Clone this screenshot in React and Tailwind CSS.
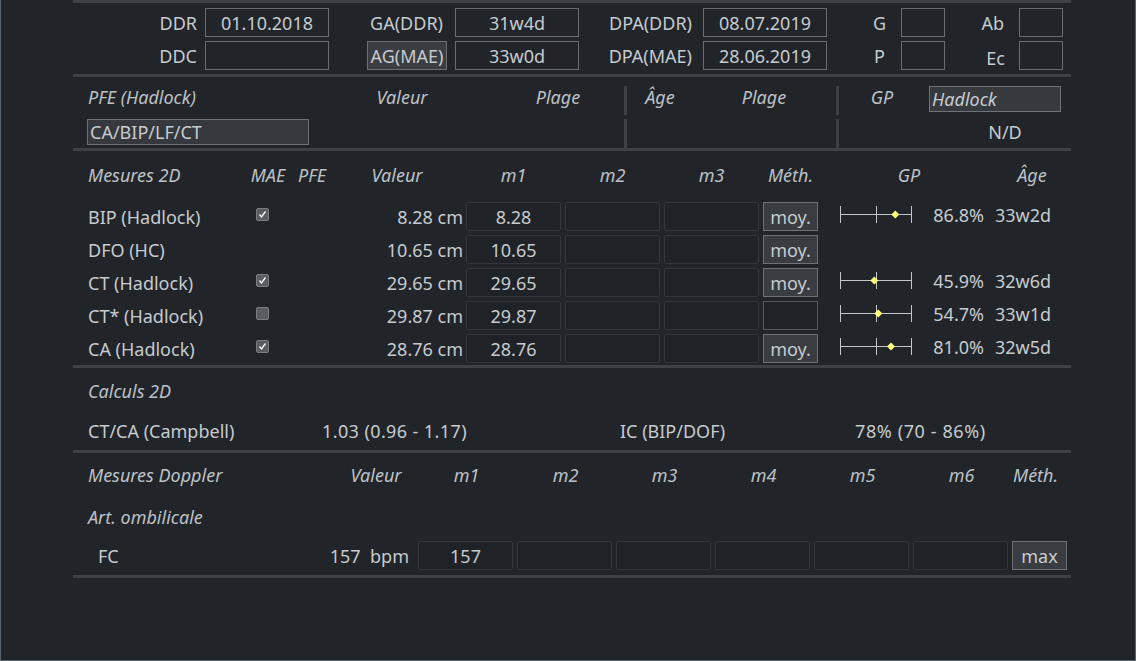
import React from "react";

const rows2d = [
  { name: "BIP (Hadlock)", chk: true, val: "8.28 cm", m1: "8.28", meth: "moy.", gp: 55.3, pct: "86.8%", age: "33w2d" },
  { name: "DFO (HC)", chk: null, val: "10.65 cm", m1: "10.65", meth: "moy." },
  { name: "CT (Hadlock)", chk: true, val: "29.65 cm", m1: "29.65", meth: "moy.", gp: 34.3, pct: "45.9%", age: "32w6d" },
  { name: "CT* (Hadlock)", chk: false, val: "29.87 cm", m1: "29.87", meth: "", gp: 38.3, pct: "54.7%", age: "33w1d" },
  { name: "CA (Hadlock)", chk: true, val: "28.76 cm", m1: "28.76", meth: "moy.", gp: 51, pct: "81.0%", age: "32w5d" },
];

const Sep = ({ className = "" }) => <div className={`h-[3px] bg-[#3c4146] ${className}`} />;

function Field({ w = "w-[124px]", children }) {
  return (
    <div className={`${w} h-[29px] shrink-0 border border-[#686c70] flex items-center justify-center`}>
      {children}
    </div>
  );
}

function Cell({ w = "w-[95px]", children }) {
  return (
    <div className={`${w} h-[29px] shrink-0 rounded-[2px] border border-[#32363a] bg-[#1f2226] flex items-center justify-center`}>
      {children}
    </div>
  );
}

function MethBtn({ label }) {
  if (!label)
    return <div className="w-[55px] h-[29px] shrink-0 border border-[#55595d] bg-[#1f2226]" />;
  return (
    <div className="w-[55px] h-[29px] shrink-0 border border-[#6d7074] bg-[#393c40] flex items-center justify-center">
      {label}
    </div>
  );
}

function Check({ on }) {
  return (
    <div className="w-[13px] h-[13px] rounded-[2px] border border-[#7a7e83] bg-[#595d62] flex items-center justify-center -translate-y-[2px]">
      {on && (
        <svg width="9" height="9" viewBox="0 0 9 9">
          <path d="M1.5 4.5 L3.5 7 L7.5 1.5" fill="none" stroke="#ffffff" strokeWidth="1.3" />
        </svg>
      )}
    </div>
  );
}

function GpBar({ pos }) {
  return (
    <svg width="72" height="17" className="block">
      <line x1="0" y1="8.5" x2="72" y2="8.5" stroke="#c3c7cb" />
      <line x1="0.5" y1="0" x2="0.5" y2="17" stroke="#c3c7cb" />
      <line x1="36.5" y1="0" x2="36.5" y2="17" stroke="#c3c7cb" />
      <line x1="71.5" y1="0" x2="71.5" y2="17" stroke="#c3c7cb" />
      <path d={`M${pos} 4.5 L${pos + 4} 8.5 L${pos} 12.5 L${pos - 4} 8.5 Z`} fill="#ffff7a" />
    </svg>
  );
}

const Hd = ({ w, left, children }) => (
  <div className={`${w} shrink-0 ${left ? "text-left" : "text-center"} italic text-[18px] text-[#bcc1c7]`}>
    {children}
  </div>
);

export default function App() {
  return (
    <div
      className="w-[1136px] h-[661px] bg-[#212428] border-l border-r border-b border-[#56656f] text-[18px] text-[#c6cbd0] leading-none overflow-hidden"
      style={{ fontFamily: '"Noto Sans", "DejaVu Sans", sans-serif' }}
    >
      <div className="ml-[72px] w-[998px]">
        {/* dates */}
        <Sep className="h-[2px]" />
        <div className="pt-[5px] flex flex-col gap-[4px]">
          <div className="flex items-center h-[29px]">
            <div className="w-[132px] text-right pr-[8px]">DDR</div>
            <Field>01.10.2018</Field>
            <div className="w-[38px]" />
            <div className="w-[80px] text-right pr-[4px]">GA(DDR)</div>
            <div className="w-[8px]" />
            <Field>31w4d</Field>
            <div className="w-[124px] text-right pr-[11px]">DPA(DDR)</div>
            <Field>08.07.2019</Field>
            <div className="w-[74px] text-right pr-[15px]">G</div>
            <Field w="w-[44px]" />
            <div className="w-[74px] text-right pr-[15px]">Ab</div>
            <Field w="w-[44px]" />
          </div>
          <div className="flex items-center h-[29px]">
            <div className="w-[132px] text-right pr-[8px]">DDC</div>
            <Field />
            <div className="w-[38px]" />
            <div className="w-[80px] h-[29px] bg-[#3a3d41] border border-[#6c6f73] flex items-center justify-center">
              AG(MAE)
            </div>
            <div className="w-[8px]" />
            <Field>33w0d</Field>
            <div className="w-[124px] text-right pr-[11px]">DPA(MAE)</div>
            <Field>28.06.2019</Field>
            <div className="w-[74px] text-right pr-[16px]">P</div>
            <Field w="w-[44px]" />
            <div className="w-[74px] text-right pr-[14px] translate-y-[2px]">Ec</div>
            <Field w="w-[44px]" />
          </div>
        </div>
        <Sep className="mt-[4px]" />

        {/* PFE */}
        <div className="pt-[9px] flex flex-col gap-[4px]">
          <div className="flex h-[29px]">
            <div className="w-[551px] flex items-start pt-[2px] pl-[15px]">
              <div className="w-[274px] italic text-[18px] text-[#bcc1c7]">PFE (Hadlock)</div>
              <Hd w="w-[80px]">Valeur</Hd>
              <div className="w-[76px]" />
              <Hd w="w-[80px]">Plage</Hd>
            </div>
            <div className="w-[3px] bg-[#3c4146]" />
            <div className="w-[209px] flex items-start pt-[2px]">
              <div className="w-[7px]" />
              <Hd w="w-[52px]">Âge</Hd>
              <div className="w-[38px]" />
              <Hd w="w-[80px]">Plage</Hd>
            </div>
            <div className="w-[3px] bg-[#3c4146]" />
            <div className="flex items-start">
              <div className="w-[13px]" />
              <div className="pt-[2px]">
                <Hd w="w-[60px]">GP</Hd>
              </div>
              <div className="w-[17px]" />
              <div className="w-[132px] h-[26px] bg-[#36393d] border border-[#6f7276] flex items-center pl-[2px] italic text-[18px]">
                Hadlock
              </div>
            </div>
          </div>
          <div className="flex h-[29px]">
            <div className="w-[551px] pl-[14px]">
              <div className="w-[222px] h-[26px] bg-[#35383c] border border-[#6d7074] flex items-center pl-[2px]">
                CA/BIP/LF/CT
              </div>
            </div>
            <div className="w-[3px] bg-[#3c4146]" />
            <div className="w-[209px]" />
            <div className="w-[3px] bg-[#3c4146]" />
            <div className="flex items-start pt-[4px]">
              <div className="w-[126px]" />
              <div className="w-[80px] text-center">N/D</div>
            </div>
          </div>
        </div>
        <Sep />

        {/* Mesures 2D */}
        <div className="mt-[9px] h-[29px] flex items-center pl-[15px]">
          <div className="w-[160px] italic text-[18px] text-[#bcc1c7]">Mesures 2D</div>
          <Hd w="w-[40px]">MAE</Hd>
          <Hd w="w-[48px]">PFE</Hd>
          <div className="w-[21px]" />
          <Hd w="w-[80px]">Valeur</Hd>
          <div className="w-[29px]" />
          <Hd w="w-[95px]">m1</Hd>
          <div className="w-[4px]" />
          <Hd w="w-[95px]">m2</Hd>
          <div className="w-[4px]" />
          <Hd w="w-[95px]">m3</Hd>
          <div className="w-[4px]" />
          <Hd w="w-[55px]">Méth.</Hd>
          <div className="w-[22px]" />
          <Hd w="w-[138px]">GP</Hd>
          <div className="w-[24px]" />
          <Hd w="w-[60px]">Âge</Hd>
        </div>
        <div className="mt-[13px] flex flex-col gap-[4px]">
          {rows2d.map((r) => (
            <div key={r.name} className="h-[29px] flex items-center pl-[15px]">
              <div className="w-[160px] shrink-0">{r.name}</div>
              <div className="w-[28px] shrink-0 flex justify-center">
                {r.chk !== null && <Check on={r.chk} />}
              </div>
              <div className="w-[187px] shrink-0 text-right">{r.val}</div>
              <div className="w-[3px]" />
              <Cell>{r.m1}</Cell>
              <div className="w-[4px]" />
              <Cell />
              <div className="w-[4px]" />
              <Cell />
              <div className="w-[4px]" />
              <MethBtn label={r.meth} />
              <div className="w-[22px] shrink-0" />
              {r.pct && (
                <div className="flex items-center -translate-y-[2px]">
                  <GpBar pos={r.gp} />
                  <div className="w-[72px] text-right">{r.pct}</div>
                  <div className="ml-[11px]">{r.age}</div>
                </div>
              )}
            </div>
          ))}
        </div>
        <Sep className="mt-[2px]" />

        {/* Calculs 2D */}
        <div className="mt-[8px] h-[29px] flex items-center pl-[15px] italic text-[18px] text-[#bcc1c7]">
          Calculs 2D
        </div>
        <div className="mt-[11px] h-[29px] flex items-center pl-[15px]">
          <div className="w-[234px]">CT/CA (Campbell)</div>
          <div className="w-[298px] tracking-[0.4px]">1.03 (0.96 - 1.17)</div>
          <div className="w-[235px]">IC (BIP/DOF)</div>
          <div className="tracking-[0.6px]">78% (70 - 86%)</div>
        </div>
        <Sep className="mt-[5px]" />

        {/* Doppler */}
        <div className="mt-[7px] h-[29px] flex items-center pl-[15px]">
          <div className="w-[248px] italic text-[18px] text-[#bcc1c7]">Mesures Doppler</div>
          <Hd w="w-[80px]">Valeur</Hd>
          <div className="w-[3px]" />
          <Hd w="w-[95px]">m1</Hd>
          <div className="w-[4px]" />
          <Hd w="w-[95px]">m2</Hd>
          <div className="w-[4px]" />
          <Hd w="w-[95px]">m3</Hd>
          <div className="w-[4px]" />
          <Hd w="w-[95px]">m4</Hd>
          <div className="w-[4px]" />
          <Hd w="w-[95px]">m5</Hd>
          <div className="w-[4px]" />
          <Hd w="w-[95px]">m6</Hd>
          <div className="w-[4px]" />
          <Hd w="w-[55px]" left>Méth.</Hd>
        </div>
        <div className="mt-[13px] h-[29px] flex items-center pl-[15px] italic text-[18px] text-[#bcc1c7]">
          Art. ombilicale
        </div>
        <div className="mt-[10px] h-[29px] flex items-center pl-[25px]">
          <div className="w-[311px] shrink-0 flex justify-between">
            <span>FC</span>
            <span className="whitespace-pre">157  bpm</span>
          </div>
          <div className="w-[9px]" />
          <Cell>157</Cell>
          <div className="w-[4px]" />
          <Cell />
          <div className="w-[4px]" />
          <Cell />
          <div className="w-[4px]" />
          <Cell />
          <div className="w-[4px]" />
          <Cell />
          <div className="w-[4px]" />
          <Cell />
          <div className="w-[4px]" />
          <MethBtn label="max" />
        </div>
        <Sep className="mt-[5px]" />
      </div>
    </div>
  );
}
